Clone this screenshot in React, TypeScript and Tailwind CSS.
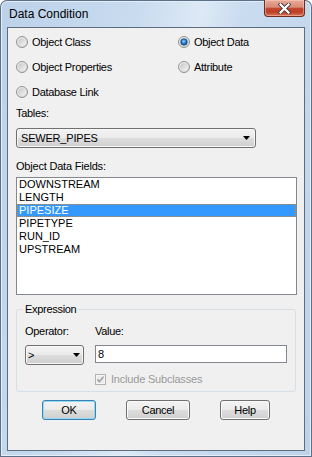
import React from "react";

const FONT = "font-['Liberation_Sans',Arial,sans-serif]";
const BTN_BG =
  "bg-[linear-gradient(to_bottom,#f3f3f3_0%,#ebebeb_48%,#dddddd_52%,#cfcfcf_100%)]";

function Radio({ checked }: { checked?: boolean }) {
  return (
    <svg width="12" height="12" viewBox="0 0 12 12" className="shrink-0">
      <defs>
        <linearGradient id="ro" x1="0" y1="0" x2="1" y2="1">
          <stop offset="0" stopColor="#f4f4f4" />
          <stop offset="1" stopColor="#d4d4d4" />
        </linearGradient>
        <linearGradient id="ri" x1="0" y1="0" x2="1" y2="1">
          <stop offset="0" stopColor="#c4c4c4" />
          <stop offset="1" stopColor="#f6f6f6" />
        </linearGradient>
        <radialGradient id="rb" cx="0.45" cy="0.4" r="0.65">
          <stop offset="0" stopColor="#9ad6ff" />
          <stop offset="0.45" stopColor="#2d86d8" />
          <stop offset="1" stopColor="#0a3b75" />
        </radialGradient>
      </defs>
      <circle cx="6" cy="6" r="5.5" fill="url(#ro)" stroke="#929292" />
      <circle cx="6" cy="6" r="3.8" fill="url(#ri)" />
      {checked && <circle cx="6" cy="6" r="3.3" fill="url(#rb)" stroke="#123e6e" strokeWidth="0.6" />}
    </svg>
  );
}

function Arrow() {
  return (
    <svg width="7" height="4" viewBox="0 0 7 4" className="shrink-0">
      <path d="M0 0 H7 L3.5 4 Z" fill="#000" />
    </svg>
  );
}

function RadioItem({ label, checked }: { label: string; checked?: boolean }) {
  return (
    <div className="flex h-[16px] items-center gap-[4px]">
      <Radio checked={checked} />
      <span className="leading-[16px] tracking-[-0.3px]">{label}</span>
    </div>
  );
}

function Button({ label, w, def }: { label: string; w: string; def?: boolean }) {
  return (
    <div
      className={`${w} flex h-[20px] items-center justify-center rounded-[3px] border ${BTN_BG} ${
        def
          ? "border-[#3c7fb1] shadow-[inset_0_0_0_1px_#8fdcf7]"
          : "border-[#707070] shadow-[inset_0_0_0_1px_#fbfbfb]"
      } text-[11px] leading-[14px] tracking-[-0.3px] text-black`}
    >
      {label}
    </div>
  );
}

export default function App() {
  const fields = ["DOWNSTREAM", "LENGTH", "PIPESIZE", "PIPETYPE", "RUN_ID", "UPSTREAM"];
  return (
    <div
      className={`${FONT} flex h-[457px] w-[312px] flex-col overflow-hidden rounded-t-[7px] bg-[linear-gradient(100deg,#bcd2ea_0%,#c8dbef_35%,#dde9f5_52%,#cadcf0_62%,#bdd3ea_100%)] shadow-[inset_0_0_0_1px_#5c7089,inset_0_0_0_2px_#e4eef8] text-black`}
    >
      {/* Title bar */}
      <div className="flex h-[27px] shrink-0 items-start">
        <div className="pl-[9px] pt-[6px] text-[12px] leading-[16px] text-black">Data Condition</div>
        <div className="ml-auto mr-[7px] flex h-[17px] w-[41px] items-center justify-center rounded-b-[4px] border border-t-0 border-[#6e2b20] bg-[linear-gradient(to_bottom,#e8ab9b_0%,#d98a75_45%,#c3482f_52%,#bd3f27_75%,#d7775c_100%)] shadow-[inset_0_0_0_1px_rgba(255,215,200,0.45)]">
          <svg width="13" height="11" viewBox="0 0 13 11">
            <path d="M2.5 1.5 L10.5 9.5 M10.5 1.5 L2.5 9.5" stroke="#4a3a38" strokeWidth="4" strokeLinecap="square" />
            <path d="M2.5 1.5 L10.5 9.5 M10.5 1.5 L2.5 9.5" stroke="#ffffff" strokeWidth="2.2" strokeLinecap="square" />
          </svg>
        </div>
      </div>

      {/* Client area */}
      <div className="mx-[7px] flex h-[424px] shrink-0 flex-col border border-[#5f6c7e] bg-[#f0f0f0] pl-[8px] pr-[7px] text-[11px]">
        {/* Radios */}
        <div className="mt-[6px] grid grid-cols-[162px_1fr] gap-y-[9px]">
          <RadioItem label="Object Class" />
          <RadioItem label="Object Data" checked />
          <RadioItem label="Object Properties" />
          <RadioItem label="Attribute" />
          <RadioItem label="Database Link" />
        </div>

        <div className="mt-[6px] leading-[14px] tracking-[-0.3px]">Tables:</div>

        <div
          className={`mt-[8px] flex h-[20px] w-[240px] items-center rounded-[3px] border border-[#707070] px-[4px] ${BTN_BG} shadow-[inset_0_0_0_1px_#f8f8f8]`}
        >
          <span className="leading-[14px] tracking-[-0.2px]">SEWER_PIPES</span>
          <span className="ml-auto mr-[1px] flex">
            <Arrow />
          </span>
        </div>

        <div className="mt-[11px] leading-[14px] tracking-[-0.2px]">Object Data Fields:</div>

        <div className="mt-[4px] h-[118px] w-[281px] border border-[#828790] bg-white">
          {fields.map((f) => (
            <div
              key={f}
              className={`h-[13px] pl-[2px] leading-[13px] ${
                f === "PIPESIZE"
                  ? "bg-[#3399ff] text-white outline outline-dotted outline-[#d9862e] -outline-offset-1"
                  : "text-black"
              }`}
            >
              {f}
            </div>
          ))}
        </div>

        {/* Expression group */}
        <fieldset className="mt-[8px] mr-[1px] rounded-[3px] border border-[#d5dfe5] pb-[5px] pl-[8px]">
          <legend className="-ml-[2px] px-[2px] leading-[13px] tracking-[-0.3px]">Expression</legend>
          <div className="mt-[8px] grid grid-cols-[59px_192px] gap-x-[11px]">
            <div className="leading-[14px] tracking-[-0.3px]">Operator:</div>
            <div className="leading-[14px] tracking-[-0.3px]">Value:</div>
            <div
              className={`mt-[7px] flex h-[20px] items-center rounded-[3px] border border-[#707070] pl-[2px] pr-[3px] ${BTN_BG} shadow-[inset_0_0_0_1px_#f8f8f8]`}
            >
              <span className="leading-[14px]">&gt;</span>
              <span className="ml-auto flex">
                <Arrow />
              </span>
            </div>
            <div className="mt-[7px] flex h-[18px] items-center border border-[#828790] bg-white pl-[2px]">
              <span className="leading-[14px]">8</span>
            </div>
            <div />
            <div className="mt-[8px] flex h-[13px] items-center gap-[5px]">
              <svg width="11" height="11" viewBox="0 0 11 11" className="shrink-0">
                <rect x="0.5" y="0.5" width="10" height="10" fill="#f4f4f4" stroke="#b2b2b2" />
                <rect x="2" y="2" width="7" height="7" fill="#ececec" />
                <path d="M2.4 5.4 L4.4 7.6 L8.6 2.8" fill="none" stroke="#a3a3a3" strokeWidth="1.6" />
              </svg>
              <span className="leading-[13px] tracking-[-0.2px] text-[#9a9a9a]">Include Subclasses</span>
            </div>
          </div>
        </fieldset>

        {/* Buttons */}
        <div className="mt-[8px] flex justify-center gap-[30px] pr-[1px]">
          <Button label="OK" w="w-[54px]" def />
          <Button label="Cancel" w="w-[64px]" />
          <Button label="Help" w="w-[50px]" />
        </div>
      </div>
    </div>
  );
}
